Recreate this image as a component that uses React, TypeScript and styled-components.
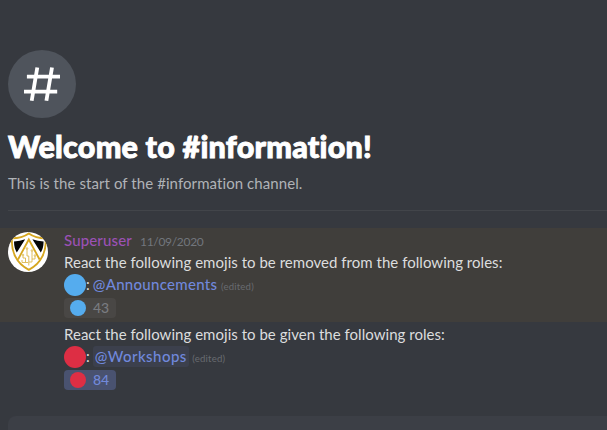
import React from 'react';
import styled, { createGlobalStyle } from 'styled-components';

const Global = createGlobalStyle`
  *, *::before, *::after { box-sizing: border-box; }
  body {
    margin: 0;
    background: #36393f;
    font-family: Lato, "Noto Sans", sans-serif;
    font-variant-ligatures: none;
    overflow: hidden;
  }
`;

const Page = styled.main`
  display: flex;
  flex-direction: column;
  width: 607px;
  height: 430px;
  overflow: hidden;
  background: #36393f;
  color: #dcddde;
`;

const Intro = styled.header`
  display: flex;
  flex-direction: column;
  margin: 50px 0 0 8px;
  height: 161px;
  flex: none;
  border-bottom: 1px solid #42454a;
`;

const ChannelIcon = styled.div`
  width: 68px;
  height: 68px;
  border-radius: 50%;
  background: #4f545c;
  svg { display: block; }
`;

const Title = styled.h1`
  margin: 8px 0 0;
  height: 40px;
  font-size: 30.5px;
  line-height: 40px;
  font-weight: 900;
  letter-spacing: 0.22px;
  -webkit-text-stroke: 0.9px #fff;
  color: #fff;
  white-space: nowrap;
`;

const Subtitle = styled.p`
  margin: 7px 0 0;
  font-size: 15px;
  line-height: 20px;
  letter-spacing: 0.08px;
  color: #b0b3b7;
  white-space: nowrap;
`;

const Message = styled.article<{ $mentioned?: boolean }>`
  display: flex;
  flex: none;
  gap: 16px;
  padding: 2px 0 0 8px;
  margin-top: ${p => (p.$mentioned ? 17 : 0)}px;
  height: 94px;
  background: ${p => (p.$mentioned ? '#403e3b' : 'transparent')};
`;

const AvatarSlot = styled.div`
  width: 40px;
  flex: none;
  padding-top: 2px;
  svg { display: block; }
`;

const Body = styled.div`
  display: flex;
  flex-direction: column;
`;

const Line = styled.div`
  display: flex;
  align-items: center;
  height: 22px;
  font-size: 15px;
  line-height: 22px;
  letter-spacing: 0.03px;
  white-space: pre;
`;

const Text = styled.span`
  height: 22px;
  line-height: 20px;
`;

const Author = styled(Text)`
  color: #9b51b5;
  font-weight: 500;
  letter-spacing: 0.15px;
`;

const Time = styled.time`
  height: 22px;
  line-height: 23px;
  margin-left: 8px;
  font-size: 12px;
  letter-spacing: -0.3px;
  color: #72767d;
`;

const Dot = styled.span<{ $size: number; $color: string }>`
  flex: none;
  width: ${p => p.$size}px;
  height: ${p => p.$size}px;
  border-radius: 50%;
  background: ${p => p.$color};
`;

const Mention = styled.span<{ $filled?: boolean }>`
  margin: 0 0 1px 3px;
  padding: 0 ${p => (p.$filled ? 2 : 0)}px;
  height: 21px;
  line-height: 20px;
  border-radius: 3px;
  color: #7088dc;
  font-weight: 500;
  letter-spacing: ${p => (p.$filled ? 0.45 : 0.3)}px;
  background: ${p => (p.$filled ? '#3c404d' : 'transparent')};
`;

const Edited = styled.span`
  margin: 3px 0 0 3.5px;
  font-size: 9.6px;
  letter-spacing: 0.2px;
  color: #686b70;
`;

const Reaction = styled.div<{ $active?: boolean }>`
  display: flex;
  align-items: center;
  gap: 7px;
  width: 52px;
  height: 20px;
  margin-top: 2px;
  padding-left: 6px;
  border-radius: 4px;
  font-size: 14px;
  line-height: 20px;
  font-weight: 500;
  background: ${p => (p.$active ? '#495270' : '#494745')};
  color: ${p => (p.$active ? '#7289da' : '#797b80')};
`;

const Composer = styled.div`
  flex: none;
  height: 14px;
  margin: 0 0 0 8px;
  border-radius: 8px 0 0 0;
  background: #3c3f46;
`;

const Hash = () => (
  <ChannelIcon>
    <svg width="68" height="68" viewBox="0 0 68 68" fill="none" stroke="#fff" strokeWidth="3.8">
      <path d="M29.3 17.5 23.7 50.7M44 17.5 38.4 50.7M18.9 26.7H52M16 41.7H49.2" />
    </svg>
  </ChannelIcon>
);

const Avatar = () => (
  <AvatarSlot>
    <svg width="40" height="40" viewBox="0 0 40 40">
      <defs>
        <clipPath id="avatar-circle"><circle cx="20" cy="20" r="20" /></clipPath>
      </defs>
      <g clipPath="url(#avatar-circle)">
        <rect width="40" height="40" fill="#fff" />
        <path d="M6 9.5Q12 9 17.2 7.2L8.8 20.5Q6 16 6 9.5Z" fill="#050606" />
        <path d="M35.6 9.5Q29.6 9 24.4 7.2L32.8 20.5Q35.6 16 35.6 9.5Z" fill="#050606" />
        <path d="M20.8 1.5Q14 6.3 4 6.3C3 19 8 31.5 20.8 37.8 33.6 31.5 38.6 19 37.6 6.3Q27.6 6.3 20.8 1.5Z" fill="none" stroke="#d6a721" strokeWidth="1.9" />
        <path d="M10 27.5 20.8 7.5 31.6 27.5" fill="none" stroke="#d6a721" strokeWidth="1.8" />
        <g fill="none" stroke="#dcb94e" strokeWidth=".9">
          <path d="M20.8 33.5V24H19V17M17.5 30.5V26H15V24M20.8 30H24V19M14 28V30.5H20M24 27H27V24" />
          <circle cx="19" cy="16.5" r=".8" />
          <circle cx="24" cy="18.5" r=".8" />
          <circle cx="15" cy="23" r=".8" />
          <circle cx="27" cy="23.5" r=".8" />
        </g>
      </g>
    </svg>
  </AvatarSlot>
);

export default function App() {
  return (
    <Page>
      <Global />
      <Intro>
        <Hash />
        <Title>Welcome to #information!</Title>
        <Subtitle>This is the start of the #information channel.</Subtitle>
      </Intro>
      <Message $mentioned>
        <Avatar />
        <Body>
          <Line><Author>Superuser</Author><Time>11/09/2020</Time></Line>
          <Line><Text>React the following emojis to be removed from the following roles:</Text></Line>
          <Line>
            <Dot $size={22} $color="#55acee" /><Text>:</Text><Mention>@Announcements</Mention><Edited>(edited)</Edited>
          </Line>
          <Reaction><Dot $size={16} $color="#55acee" />43</Reaction>
        </Body>
      </Message>
      <Message>
        <AvatarSlot />
        <Body>
          <Line><Text>React the following emojis to be given the following roles:</Text></Line>
          <Line>
            <Dot $size={22} $color="#dd2e44" /><Text>:</Text><Mention $filled>@Workshops</Mention><Edited>(edited)</Edited>
          </Line>
          <Reaction $active><Dot $size={16} $color="#dd2e44" />84</Reaction>
        </Body>
      </Message>
      <Composer />
    </Page>
  );
}
